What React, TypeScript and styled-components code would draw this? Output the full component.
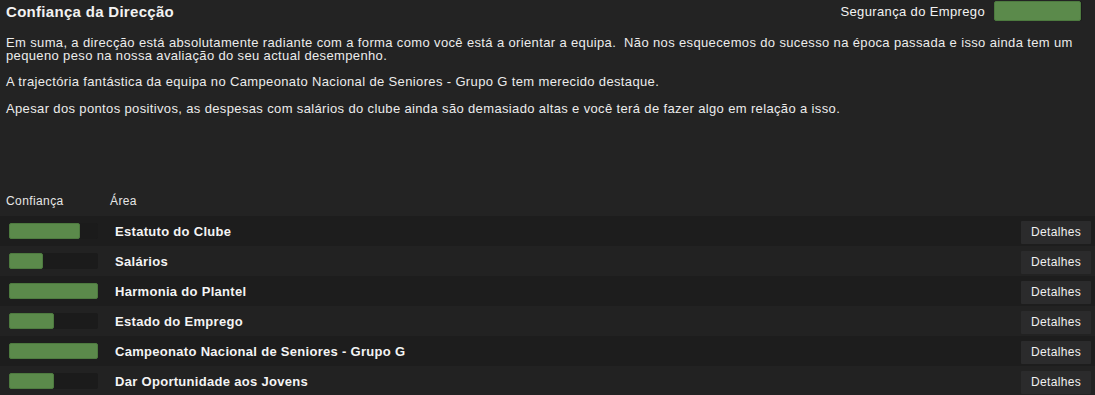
import React from "react";
import styled, { createGlobalStyle } from "styled-components";

const Global = createGlobalStyle`
  html, body { margin: 0; padding: 0; background: #232323; }
  body { font-family: "Liberation Sans", Arial, sans-serif; color: #ececec; letter-spacing: 0.36px; }
`;

const Page = styled.div`
  width: 1095px;
  height: 395px;
  overflow: hidden;
  background: #232323;
`;

const Header = styled.div`
  display: flex;
  align-items: center;
  justify-content: space-between;
  height: 22px;
  padding: 0 13px 0 6px;
`;

const Title = styled.h1`
  margin: 0;
  font-size: 15px;
  font-weight: bold;
  letter-spacing: 0.3px;
  color: #f2f2f2;
`;

const Security = styled.div`
  display: flex;
  align-items: center;
  gap: 9px;
  font-size: 13px;
  color: #f2f2f2;
`;

const Track = styled.div<{ $w: number; $h: number }>`
  width: ${(p) => p.$w}px;
  height: ${(p) => p.$h}px;
  background: #1b1b1b;
  border-radius: 2px;
  display: flex;
`;

const Fill = styled.div`
  height: 100%;
  background: #5b8a4b;
  border: 1px solid #4d7a3f;
  box-sizing: border-box;
  border-radius: 2px;
`;

const Text = styled.div`
  padding: 15px 6px 0 6px;
  height: 154px;
  font-size: 13px;
  line-height: 12.5px;
  color: #ececec;
`;

const Para = styled.p`
  margin: 0 0 14px 0;
`;

const ColHeads = styled.div`
  display: grid;
  grid-template-columns: 104px 1fr;
  padding: 0 6px;
  height: 20px;
  align-items: center;
  font-size: 12px;
  letter-spacing: 0.4px;
  color: #e6e6e6;
`;

const Rows = styled.div`
  display: flex;
  flex-direction: column;
  padding-top: 5px;
`;

const Row = styled.div<{ $dark: boolean }>`
  display: grid;
  grid-template-columns: 106px 1fr auto;
  align-items: center;
  height: 30px;
  padding: 0 4px 0 9px;
  background: ${(p) => (p.$dark ? "#1d1d1d" : "#222222")};
`;

const Label = styled.div`
  font-size: 13px;
  font-weight: bold;
  letter-spacing: 0.3px;
  color: #f4f4f4;
`;

const Button = styled.button`
  width: 70px;
  height: 23px;
  margin-top: 2px;
  border: none;
  border-radius: 1px;
  background: #2b2b2c;
  color: #f0f0f0;
  font-family: "Liberation Sans", Arial, sans-serif;
  font-size: 12px;
  letter-spacing: 0.36px;
  padding: 0;
`;

const rows = [
  { name: "Estatuto do Clube", v: 0.8 },
  { name: "Salários", v: 0.38 },
  { name: "Harmonia do Plantel", v: 1 },
  { name: "Estado do Emprego", v: 0.51 },
  { name: "Campeonato Nacional de Seniores - Grupo G", v: 1 },
  { name: "Dar Oportunidade aos Jovens", v: 0.51 },
];

export default function App() {
  return (
    <Page>
      <Global />
      <Header>
        <Title>Confiança da Direcção</Title>
        <Security>
          Segurança do Emprego
          <Track $w={88} $h={20}>
            <Fill style={{ width: "99%" }} />
          </Track>
        </Security>
      </Header>
      <Text>
        <Para>
          Em suma, a direcção está absolutamente radiante com a forma como você está a orientar a equipa.&nbsp; Não nos esquecemos do sucesso na época passada e isso ainda tem um pequeno peso na nossa avaliação do seu actual desempenho.
        </Para>
        <Para>A trajectória fantástica da equipa no Campeonato Nacional de Seniores - Grupo G tem merecido destaque.</Para>
        <Para>Apesar dos pontos positivos, as despesas com salários do clube ainda são demasiado altas e você terá de fazer algo em relação a isso.</Para>
      </Text>
      <ColHeads>
        <span>Confiança</span>
        <span>Área</span>
      </ColHeads>
      <Rows>
        {rows.map((r, i) => (
          <Row key={r.name} $dark={i % 2 === 0}>
            <Track $w={89} $h={16}>
              <Fill style={{ width: `${r.v * 100}%` }} />
            </Track>
            <Label>{r.name}</Label>
            <Button>Detalhes</Button>
          </Row>
        ))}
      </Rows>
    </Page>
  );
}
